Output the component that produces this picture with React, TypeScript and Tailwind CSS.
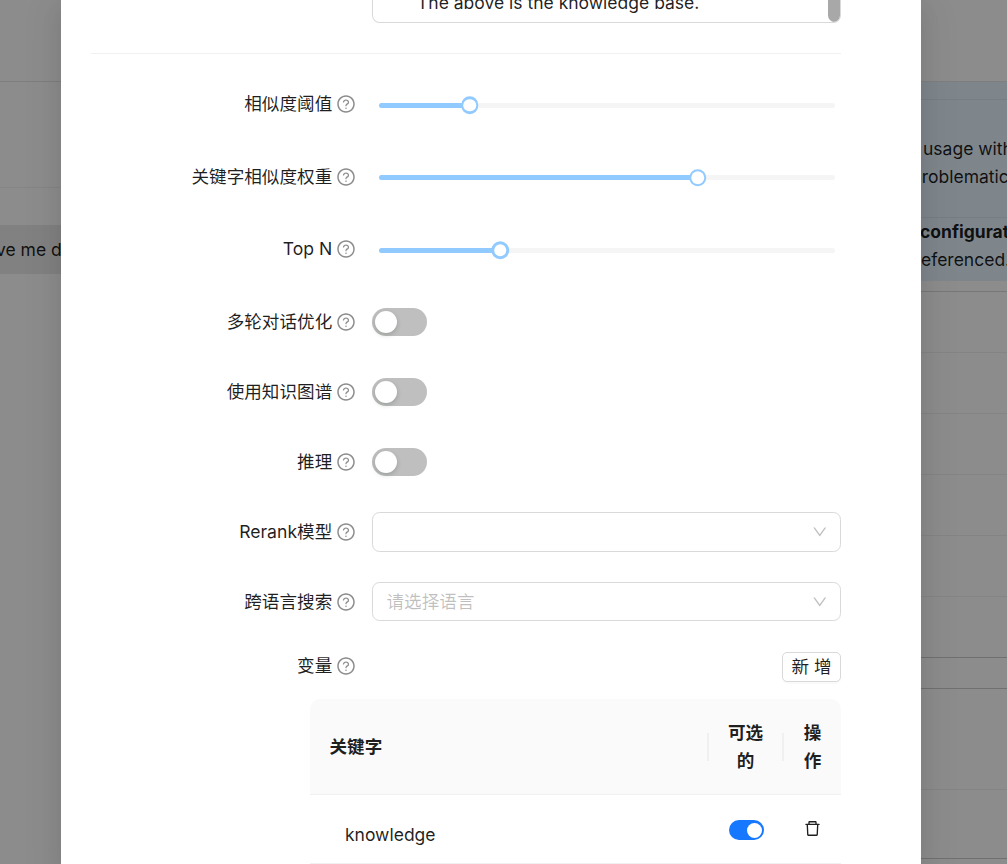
import type { ReactNode } from "react";
import {
  AiOutlineDelete,
  AiOutlineDown,
  AiOutlineQuestionCircle,
} from "react-icons/ai";

const Label = ({ children }: { children: ReactNode }) => (
  <div className="w-[264.75px] shrink-0 flex items-center justify-end gap-[3.5px] whitespace-nowrap text-[17.6px]">
    <span>{children}</span>
    <AiOutlineQuestionCircle className="size-5 text-black/45" />
  </div>
);

const Row = ({
  label,
  className = "h-[70px]",
  children,
}: {
  label: string;
  className?: string;
  children: ReactNode;
}) => (
  <div className={`flex items-center gap-[16.25px] ${className}`}>
    <Label>{label}</Label>
    <div className="flex-1">{children}</div>
  </div>
);

const Slider = ({ value }: { value: number }) => (
  <div className="mx-[6.5px] mt-[1px] h-[5px] rounded-sm bg-[#f5f5f5] relative">
    <div
      className="h-full rounded-sm bg-[#91caff]"
      style={{ width: `${value * 100}%` }}
    />
    <div
      className="absolute top-1/2 size-[17.5px] -translate-x-1/2 -translate-y-1/2 rounded-full bg-[#91caff] p-[2.5px]"
      style={{ left: `${value * 100}%` }}
    >
      <div className="size-full rounded-full bg-white" />
    </div>
  </div>
);

const Switch = () => (
  <div className="w-[55px] h-7 rounded-full bg-[#bfbfbf] p-[3px]">
    <div className="size-[22px] rounded-full bg-white shadow-[0_2px_5px_rgba(0,35,11,0.2)]" />
  </div>
);

const Select = ({
  placeholder,
  className,
}: {
  placeholder?: string;
  className: string;
}) => (
  <div
    className={`flex items-center justify-between rounded-[7.5px] border border-[#d9d9d9] bg-white pl-[13.5px] pr-3 text-[17.6px] text-black/25 ${className}`}
  >
    <span className="pt-px">{placeholder}</span>
    <AiOutlineDown className="size-[17.5px]" />
  </div>
);

const Background = () => (
  <div className="flex h-full justify-between bg-white">
    <aside className="w-[61px] overflow-hidden whitespace-nowrap">
      <div className="h-[82px] border-b border-black/10" />
      <div className="h-[106px] border-b border-black/5" />
      <div className="mt-[37px] flex h-[49px] items-center bg-black/8 pt-[2px]">
        <span className="-ml-1">ve me d</span>
      </div>
    </aside>
    <section className="w-[86px] overflow-hidden whitespace-nowrap leading-[27.5px]">
      <div className="h-[82px] border-b border-black/10" />
      <div className="h-[199px] bg-[#e6f4ff]">
        <div className="h-[18px] border-b border-black/6" />
        <div className="h-[118px] border-b border-black/6 pt-[35px]">
          <p className="pl-[2px]">usage with</p>
          <p className="-ml-[10px]">problematic</p>
        </div>
        <p className="-ml-[1px] font-bold">configuration</p>
        <p>eferenced.</p>
      </div>
      <div className="h-[11px] border-b border-black/15" />
      <div className="h-[61px] border-b border-black/6" />
      <div className="h-[61px] border-b border-black/6" />
      <div className="h-[61px] border-b border-black/6" />
      <div className="h-[61px] border-b border-black/6" />
      <div className="h-[61px] border-b border-black/6" />
      <div className="h-[61px] border-b border-black/20" />
      <div className="h-[31px] border-b border-black/20" />
      <div className="h-[101px] border-b border-black/6" />
      <div className="h-[69px] border-b border-black/20" />
    </section>
  </div>
);

const VariableTable = () => (
  <div className="ml-[219px] mt-[17px]">
    <div className="flex h-[96px] items-center rounded-t-[10px] border-b border-[#f0f0f0] bg-[#fafafa] text-center text-[17.6px] font-bold leading-[27.5px]">
      <div className="flex-1 pl-[19.5px] text-left">关键字</div>
      <div className="h-7 w-[2px] bg-[#f0f0f0]" />
      <div className="w-[73px] px-[18px]">可选的</div>
      <div className="h-7 w-[2px] bg-[#f0f0f0]" />
      <div className="w-[57px] px-[18px]">操作</div>
    </div>
    <div className="flex h-[69px] items-center border-b border-[#f0f0f0]">
      <div className="flex-1 pl-[35px] pt-[13px]">knowledge</div>
      <div className="flex w-[75px] justify-center pt-[2px]">
        <div className="flex h-5 w-[35px] justify-end rounded-full bg-[#1677ff] p-[2.5px]">
          <div className="size-[15px] rounded-full bg-white" />
        </div>
      </div>
      <div className="flex w-[57px] justify-center pb-px">
        <AiOutlineDelete className="size-[19px]" />
      </div>
    </div>
  </div>
);

const App = () => {
  return (
    <div className="relative h-[864px] w-[1007px] overflow-hidden font-[Inter,'Noto_Sans_CJK_SC',sans-serif] text-[17.5px] text-black/88">
      <Background />
      <div className="absolute inset-0 flex justify-center bg-black/45 pr-[25px]">
        <div className="h-full w-[860px] bg-white pl-[30px] pr-20 shadow-[0_7px_20px_rgba(0,0,0,0.08),0_11px_35px_10px_rgba(0,0,0,0.05)]">
          <div className="ml-[281px] flex h-[23px] justify-between overflow-hidden rounded-b-[7.5px] border border-t-0 border-[#d9d9d9]">
            <p className="pl-[44px] -mt-[11px] leading-[27.5px]">
              The above is the knowledge base.
            </p>
            <div className="-mr-px w-[13px] rounded-b-full bg-[#a8a8a8]" />
          </div>
          <div className="mb-[14px] mt-[30px] border-b border-[#f0f0f0]" />

          <Row label="相似度阈值" className="h-[73px]">
            <Slider value={0.2} />
          </Row>
          <Row label="关键字相似度权重" className="h-[72px]">
            <Slider value={0.7} />
          </Row>
          <Row label="Top N" className="h-[73px]">
            <Slider value={8 / 30} />
          </Row>
          <Row label="多轮对话优化" className="mt-px h-[70px]">
            <Switch />
          </Row>
          <Row label="使用知识图谱">
            <Switch />
          </Row>
          <Row label="推理">
            <Switch />
          </Row>
          <Row label="Rerank模型">
            <Select className="h-10" />
          </Row>
          <Row label="跨语言搜索">
            <Select className="mb-px h-[39px]" placeholder="请选择语言" />
          </Row>

          <div className="mt-[15px] flex h-[30px] items-center justify-between">
            <div className="-mt-[2px]">
              <Label>变量</Label>
            </div>
            <button className="h-[30px] w-[59px] rounded-[5px] border border-[#d9d9d9] bg-white text-[17.6px] leading-none shadow-[0_2px_0_rgba(0,0,0,0.02)]">
              新 增
            </button>
          </div>
          <VariableTable />
        </div>
      </div>
    </div>
  );
};

export default App;
